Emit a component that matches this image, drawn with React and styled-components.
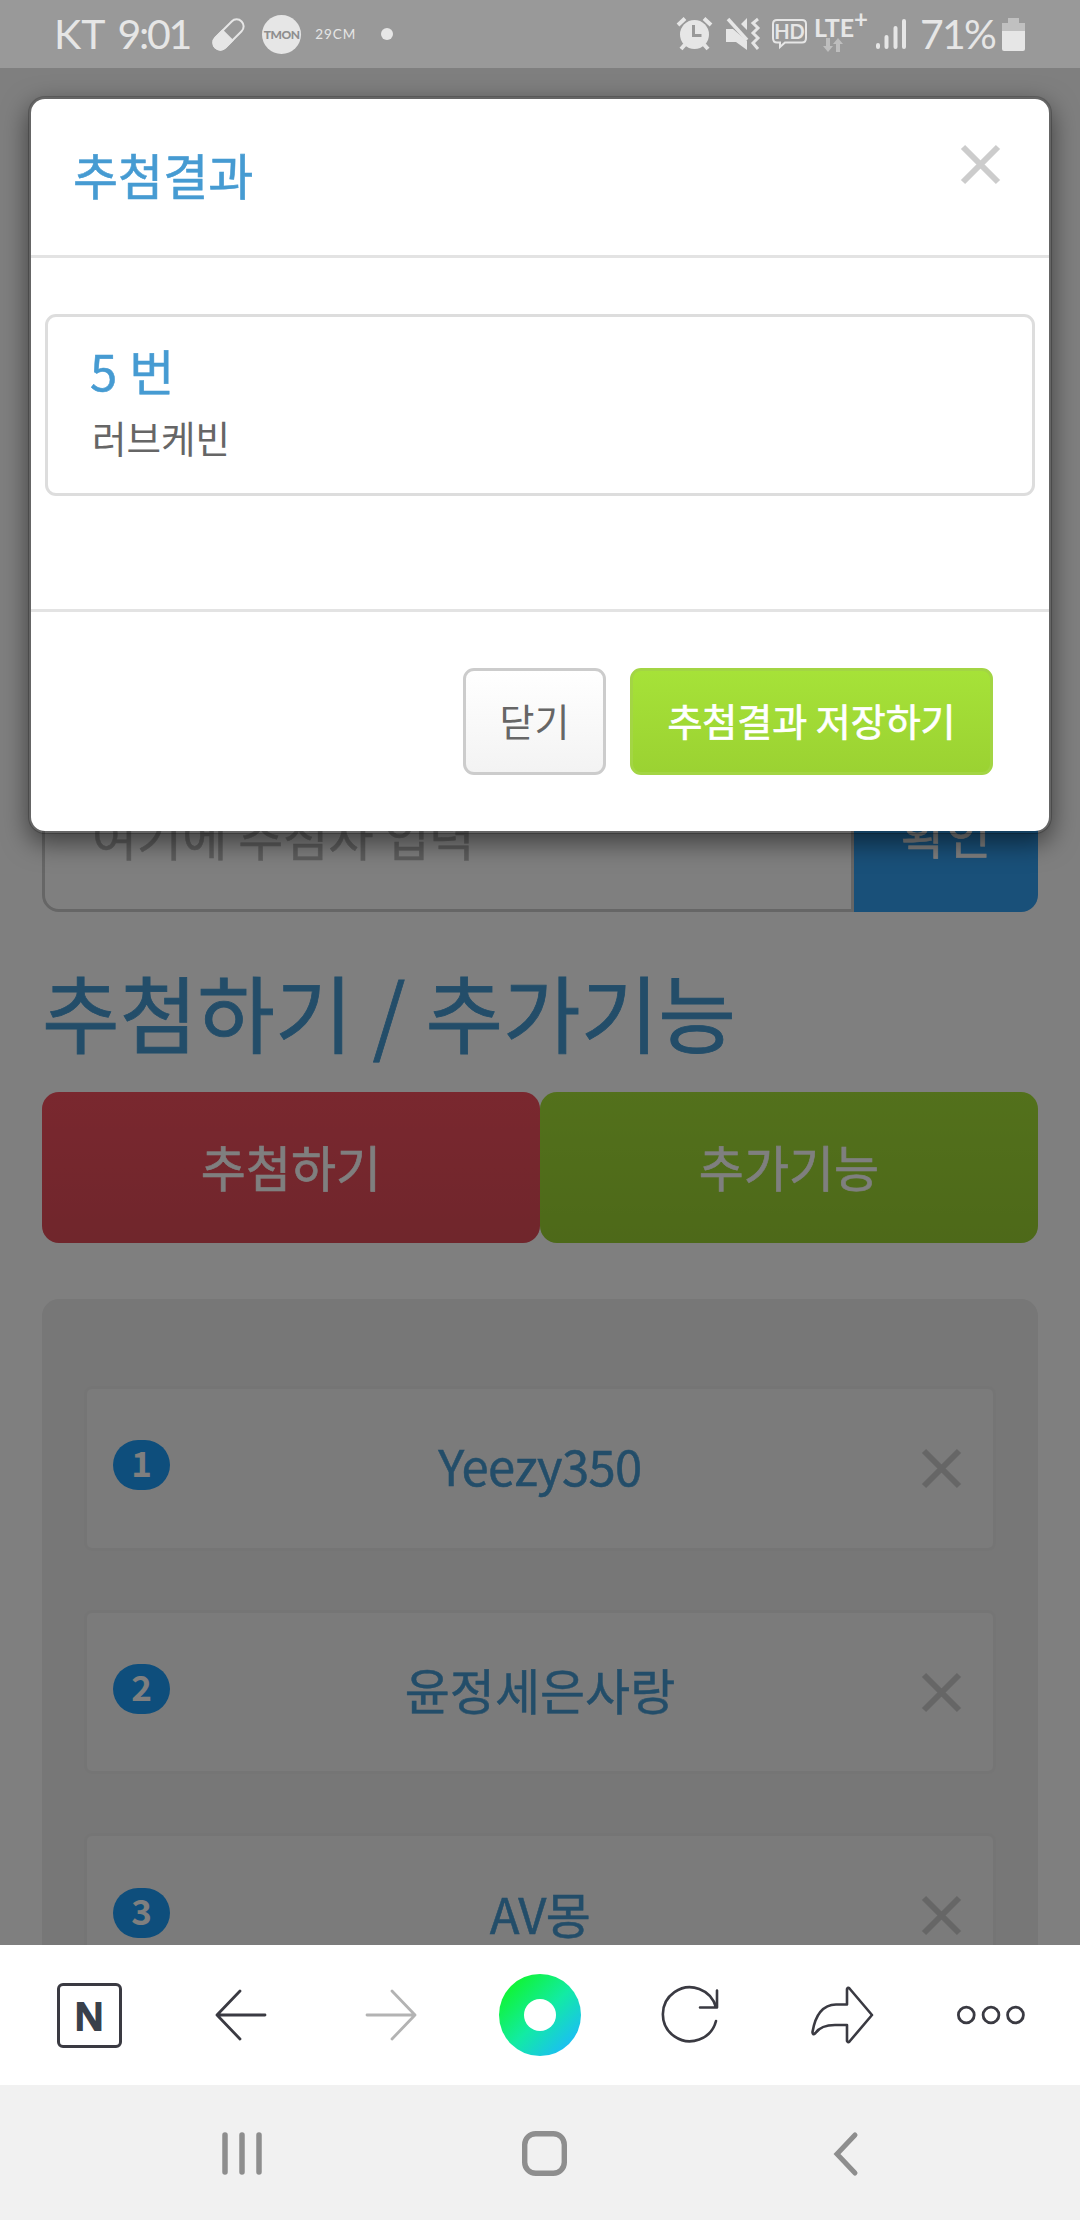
import styled, { createGlobalStyle } from 'styled-components';

const colors = {
  primary: '#469bd2',
  info: '#32a0f2',
  danger: '#f4505e',
  dangerDark: '#e04c58',
  success: '#a6e238',
  successDark: '#9bd232',
  gray: '#666',
  line: '#e3e3e3',
  ink: '#3a3a42',
  status: '#e6e6e6',
};

const GlobalStyle = createGlobalStyle`
  * {
    box-sizing: border-box;
  }

  body {
    margin: 0;
    background: #fff;
    font-family: 'Noto Sans CJK KR', sans-serif;
    color: ${colors.gray};
  }

  h1, h2, h4, p, ul {
    margin: 0;
    padding: 0;
    font-weight: 400;
  }

  button {
    font-family: inherit;
    padding: 0;
    margin: 0;
    border: 0;
    background: none;
  }

  svg {
    display: block;
    flex: none;
    overflow: visible;
  }
`;

const Screen = styled.div`
  width: 1080px;
  height: 2220px;
  display: flex;
  flex-direction: column;
  overflow: hidden;
`;

/* status bar */

const StatusBar = styled.header`
  flex: none;
  height: 68px;
  padding: 0 55px 0 54px;
  background: #999;
  display: flex;
  justify-content: space-between;
  color: ${colors.status};
`;

const StatusGroup = styled.div`
  display: flex;
  align-items: center;
`;

const StatusText = styled.span`
  font-family: Lato, sans-serif;
  font-size: 41px;
  line-height: 68px;
  margin-right: ${(props) => props.$gap || 0}px;
  letter-spacing: ${(props) => props.$spacing || 0}px;
`;

const Tmon = styled.span`
  width: 39px;
  height: 39px;
  margin: 0 14px 0 17px;
  border-radius: 50%;
  background: ${colors.status};
  color: #8f8f8f;
  font: 900 12px/39px Lato, sans-serif;
  letter-spacing: -0.5px;
  text-align: center;
`;

const Cm = styled.span`
  width: 66px;
  font: 400 13.5px/68px Lato, sans-serif;
  letter-spacing: 1px;
`;

const Dot = styled.span`
  width: 12px;
  height: 12px;
  border-radius: 50%;
  background: ${colors.status};
`;

const Lte = styled.div`
  width: 62px;
  height: 40px;
  display: flex;
  flex-direction: column;

  b {
    display: flex;
    height: 23px;
    font: 700 25px/27px Lato, sans-serif;
  }

  sup {
    font-size: 24px;
    line-height: 10px;
  }

  svg {
    margin: 1px 0 0 9px;
  }
`;

/* page */

const Viewport = styled.main`
  flex: none;
  height: 1877px;
  position: relative;
  overflow: hidden;
`;

const Page = styled.div`
  padding: 693px 42px 0;
`;

const InputGroup = styled.div`
  display: flex;
  height: 151px;
  font-size: 49px;
`;

const FakeInput = styled.div`
  width: 812px;
  padding-left: 47px;
  border: 3px solid #ccc;
  border-radius: 17px 0 0 17px;
  color: #bbb;
  line-height: 141px;
  -webkit-text-stroke: 0.5px;
`;

const ConfirmButton = styled.button`
  flex: 1;
  padding-bottom: 8px;
  border-radius: 0 17px 17px 0;
  background: ${colors.info};
  color: #fff;
  font-size: 49px;
  -webkit-text-stroke: 0.6px;
`;

const Title = styled.h1`
  margin-top: 43px;
  height: 137px;
  font-size: 84.4px;
  line-height: 110px;
  color: ${colors.primary};
  word-spacing: 1px;
  -webkit-text-stroke: 0.8px;
`;

const ButtonRow = styled.div`
  display: flex;
`;

const BigButton = styled.button`
  flex: 1;
  height: 151px;
  padding-bottom: 5px;
  border-radius: 17px;
  background: linear-gradient(
    ${(props) => (props.$danger ? colors.danger : colors.success)},
    ${(props) => (props.$danger ? colors.dangerDark : colors.successDark)}
  );
  color: #fff;
  font-size: 49px;
  -webkit-text-stroke: 0.6px;
`;

const List = styled.ul`
  margin-top: 56px;
  padding: 87px 42px;
  border-radius: 17px;
  background: #eee;
  list-style: none;
  display: flex;
  flex-direction: column;
  gap: 59px;
`;

const Item = styled.li`
  height: 164.7px;
  padding: 0 32px 0 26px;
  border: 3px solid #ebebeb;
  border-radius: 8px;
  background: #f6f6f6;
  display: grid;
  grid-template-columns: 60px 1fr 54px;
  align-items: center;

  svg {
    justify-self: end;
  }
`;

const Badge = styled.span`
  width: 57px;
  height: 50px;
  margin-bottom: 6px;
  border-radius: 25px;
  background: #1c9cf8;
  color: #fff;
  font-size: 35px;
  font-weight: 700;
  line-height: 44px;
  text-align: center;
`;

const ItemName = styled.span`
  padding-bottom: 6px;
  font-size: 49px;
  line-height: 54px;
  color: ${colors.primary};
  letter-spacing: ${(props) => (props.$latin ? -0.6 : 0)}px;
  text-align: center;
  -webkit-text-stroke: 0.5px;
`;

const Backdrop = styled.div`
  position: absolute;
  inset: 0;
  background: rgba(0, 0, 0, 0.5);
`;

/* modal */

const Modal = styled.section`
  position: absolute;
  top: 28px;
  left: 28px;
  width: 1024px;
  border: 3px solid rgba(0, 0, 0, 0.2);
  border-radius: 17px;
  background: #fff;
  background-clip: padding-box;
  box-shadow: 0 9px 26px rgba(0, 0, 0, 0.5);
`;

const ModalHeader = styled.div`
  height: 159px;
  padding: 0 49px 0 42px;
  border-bottom: 3px solid ${colors.line};
  display: flex;
  justify-content: space-between;

  svg {
    margin-top: 46px;
  }
`;

const ModalTitle = styled.h4`
  font-size: 49px;
  line-height: 70px;
  margin-top: 40px;
  color: ${colors.primary};
  -webkit-text-stroke: 0.6px;
`;

const ModalBody = styled.div`
  height: 351px;
  padding: 56px 14px 0;
`;

const Result = styled.div`
  height: 182px;
  padding: 18px 42px;
  border: 3px solid #ddd;
  border-radius: 11px;
`;

const ResultNumber = styled.h4`
  font-size: 49px;
  line-height: 70px;
  color: ${colors.primary};
  word-spacing: 1px;
  -webkit-text-stroke: 0.5px;
`;

const ResultName = styled.p`
  padding-left: 2px;
  font-size: 37.5px;
  line-height: 64px;
`;

const ModalFooter = styled.div`
  height: 222px;
  padding: 56px 56px 0;
  border-top: 3px solid ${colors.line};
  display: flex;
  justify-content: flex-end;
  gap: 24px;
`;

const FooterButton = styled.button`
  width: ${(props) => (props.$success ? 363 : 143)}px;
  height: 107px;
  padding-bottom: 4px;
  border: 3px solid ${(props) => (props.$success ? '#a3d544' : '#ccc')};
  border-radius: 11px;
  background: ${(props) =>
    props.$success
      ? `linear-gradient(${colors.success}, ${colors.successDark})`
      : 'linear-gradient(#fff, #f3f3f3)'};
  color: ${(props) => (props.$success ? '#fff' : colors.gray)};
  font-size: 38px;
  -webkit-text-stroke: ${(props) => (props.$success ? 0.7 : 0)}px;
`;

/* bottom bars */

const BrowserBar = styled.nav`
  flex: none;
  height: 140px;
  padding: 0 14px;
  background: #fff;
  display: grid;
  grid-template-columns: repeat(7, 1fr);
  align-items: center;
  justify-items: center;
`;

const NaverHome = styled.span`
  width: 65px;
  height: 65px;
  border: 3px solid ${colors.ink};
  border-radius: 6px;
  color: #39404b;
  font: 600 38px/58px 'Open Sans', sans-serif;
  text-align: center;
  -webkit-text-stroke: 1.8px #39404b;
`;

const GreenDot = styled.span`
  width: 82px;
  height: 82px;
  border-radius: 50%;
  background: linear-gradient(135deg, #10f530 12%, #12eba4 52%, #1cb8ff 92%);
  display: flex;
  align-items: center;
  justify-content: center;

  &::after {
    content: '';
    width: 32px;
    height: 32px;
    border-radius: 50%;
    background: #fff;
  }
`;

const SystemBar = styled.nav`
  flex: none;
  height: 135px;
  padding-left: 91px;
  background: #f1f1f1;
  display: grid;
  grid-template-columns: repeat(3, 302px);
  align-items: center;
  justify-items: center;
`;

const CloseIcon = ({ color = '#ccc' }) => (
  <svg width="39" height="39" viewBox="0 0 39 39" stroke={color} strokeWidth="6">
    <path d="M2 2L37 37M37 2L2 37" />
  </svg>
);

const StatusLeft = () => (
  <StatusGroup>
    <StatusText $gap={12}>KT</StatusText>
    <StatusText $gap={22} $spacing={-2.2}>9:01</StatusText>
    <svg width="33" height="33" viewBox="0 0 33 33" fill="none">
      <g transform="rotate(45 16.5 16.5)">
        <rect x="9.5" y="-2" width="14" height="37" rx="7" stroke="#e6e6e6" strokeWidth="2" />
        <path d="M8.5 17H24.5V28A8 8 0 0 1 8.5 28Z" fill="#e6e6e6" />
      </g>
    </svg>
    <Tmon>TMON</Tmon>
    <Cm>29CM</Cm>
    <Dot />
  </StatusGroup>
);

const StatusRight = () => (
  <StatusGroup>
    {/* alarm */}
    <svg width="49" height="34" viewBox="0 0 49 34" fill="none" stroke="#e6e6e6">
      <circle cx="17.5" cy="17.5" r="14.5" fill="#e6e6e6" stroke="none" />
      <path d="M1 8L8 1.5M34 8L27 1.5M4 32L8 27.5M31 32L27 27.5" strokeWidth="4" />
      <path d="M16.5 8V18.5H24.5" stroke="#999" strokeWidth="3" />
    </svg>
    {/* mute + vibrate */}
    <svg width="46" height="34" viewBox="0 0 46 34" fill="#e6e6e6">
      <path d="M0 12H7L21 24V33L10 25H0ZM15 7L21 1V13Z" />
      <path d="M2 2L21 23" stroke="#e6e6e6" strokeWidth="3.5" />
      <path d="M32 2L27 6L32 11L27 16L32 21L27 26L32 32" fill="none" stroke="#e6e6e6" strokeWidth="3" />
    </svg>
    {/* hd voice */}
    <svg width="42" height="30" viewBox="0 0 42 30" fill="none" stroke="#e6e6e6" strokeWidth="2">
      <path d="M5 1H30Q34 1 34 5V19Q34 23.5 30 23.5H13L8 28V23.5H5Q1 23.5 1 19V5Q1 1 5 1Z" />
      <text x="17.5" y="19.5" textAnchor="middle" fill="#e6e6e6" stroke="none" fontFamily="Lato, sans-serif" fontWeight="700" fontSize="20">HD</text>
    </svg>
    <Lte>
      <b>LTE<sup>+</sup></b>
      <svg width="20" height="14" viewBox="0 0 20 14" fill="#bebebe">
        <path d="M3 0H7V8H10L5 14L0 8H3ZM13 14H17V6H20L15 0L10 6H13Z" />
      </svg>
    </Lte>
    <svg width="44" height="32" viewBox="0 0 44 32" stroke="#e6e6e6" strokeWidth="4" strokeLinecap="round">
      <path d="M2 27V29M10.5 19V29M19.5 10V29M28 3V29" />
    </svg>
    <StatusText $gap={7} $spacing={-1.8}>71%</StatusText>
    <svg width="23" height="33" viewBox="0 0 23 33">
      <path d="M0 5H6V0H17V5H23V14H0Z" fill="#c0c0c0" />
      <path d="M0 13H23V31Q23 33 21 33H2Q0 33 0 31Z" fill="#e6e6e6" />
    </svg>
  </StatusGroup>
);

const items = [
  { name: 'Yeezy350', latin: true },
  { name: '윤정세은사랑' },
  { name: 'AV몽', latin: true },
];

const App = () => {
  return (
    <Screen>
      <GlobalStyle />
      <StatusBar>
        <StatusLeft />
        <StatusRight />
      </StatusBar>

      <Viewport>
        <Page>
          <InputGroup>
            <FakeInput>여기에 추첨자 입력</FakeInput>
            <ConfirmButton>확인</ConfirmButton>
          </InputGroup>
          <Title>추첨하기 / 추가기능</Title>
          <ButtonRow>
            <BigButton $danger>추첨하기</BigButton>
            <BigButton>추가기능</BigButton>
          </ButtonRow>
          <List>
            {items.map((item, index) => (
              <Item key={item.name}>
                <Badge>{index + 1}</Badge>
                <ItemName $latin={item.latin}>{item.name}</ItemName>
                <CloseIcon />
              </Item>
            ))}
          </List>
        </Page>
        <Backdrop />
        <Modal>
          <ModalHeader>
            <ModalTitle>추첨결과</ModalTitle>
            <CloseIcon />
          </ModalHeader>
          <ModalBody>
            <Result>
              <ResultNumber>5 번</ResultNumber>
              <ResultName>러브케빈</ResultName>
            </Result>
          </ModalBody>
          <ModalFooter>
            <FooterButton>닫기</FooterButton>
            <FooterButton $success>추첨결과 저장하기</FooterButton>
          </ModalFooter>
        </Modal>
      </Viewport>

      <BrowserBar>
        <NaverHome>N</NaverHome>
        <svg width="49" height="52" viewBox="0 0 49 52" fill="none" stroke={colors.ink} strokeWidth="2.8" strokeLinecap="round" strokeLinejoin="round">
          <path d="M25 2L2 26L25 50M2 26H50" />
        </svg>
        <svg width="49" height="52" viewBox="0 0 49 52" fill="none" stroke="#b3b3b3" strokeWidth="2.8" strokeLinecap="round" strokeLinejoin="round">
          <path d="M27 2L50 26L27 50M50 26H2" />
        </svg>
        <GreenDot />
        <svg width="58" height="58" viewBox="0 0 58 58" fill="none" stroke={colors.ink} strokeWidth="2.6" strokeLinecap="round" strokeLinejoin="round">
          <path d="M55 35A27 27 0 1 1 55 21.5M56 4.5V21.5H39" />
        </svg>
        <svg width="59" height="58" viewBox="0 0 59 58" fill="none" stroke={colors.ink} strokeWidth="2.6" strokeLinejoin="round">
          <path d="M36 18.5V3Q37 1 38.5 2.5L61 29L38.5 55.5Q37 57 36 55V39H24Q10 39 4.5 47Q1.5 50 1.5 46Q6 19 25 18.5Z" />
        </svg>
        <svg width="68" height="20" viewBox="0 0 68 20" fill="none" stroke={colors.ink} strokeWidth="2.8">
          <circle cx="9.3" cy="10" r="7.9" />
          <circle cx="34" cy="10" r="7.9" />
          <circle cx="58.5" cy="10" r="7.9" />
        </svg>
      </BrowserBar>

      <SystemBar>
        <svg width="40" height="44" viewBox="0 0 40 44" stroke="#8e8e8e" strokeWidth="5.5" strokeLinecap="round">
          <path d="M3 4V41M20 4V41M37 4V41" />
        </svg>
        <svg width="45" height="45" viewBox="0 0 45 45" fill="none" stroke="#8e8e8e" strokeWidth="5.4">
          <rect x="2.7" y="3.7" width="39.6" height="39.6" rx="11" />
        </svg>
        <svg width="26" height="44" viewBox="0 0 26 44" fill="none" stroke="#8e8e8e" strokeWidth="5" strokeLinecap="round">
          <path d="M22 4L4 23L22 42" />
        </svg>
      </SystemBar>
    </Screen>
  );
};

export default App;
